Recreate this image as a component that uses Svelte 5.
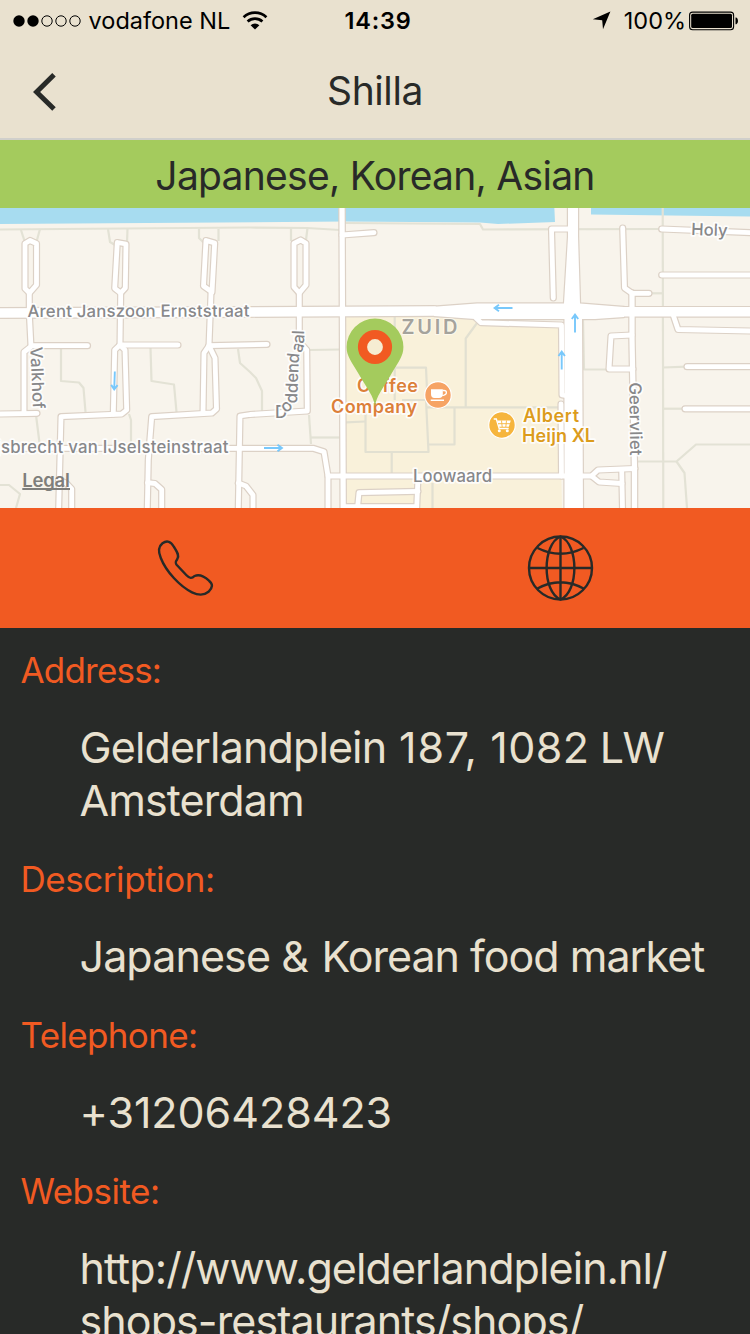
<script>
  const fields = [
    { label: 'Address:', ls: -0.8, lines: [[{ t: 'Gelderlandplein', ls: -0.87 }, { t: ' 187,', ls: 0.8 }, { t: ' 1082', ls: 0.4 }, { t: ' LW', ls: -1.6 }], [{ t: 'Amsterdam', ls: -0.9 }]] },
    { label: 'Description:', ls: -0.45, lines: [[{ t: 'Japanese ', ls: -0.91 }, { t: '& ', ls: 0.2 }, { t: 'Korean food market', ls: -0.99 }]] },
    { label: 'Telephone:', ls: -0.65, lines: [[{ t: '+31206428423', ls: -0.05 }]] },
    { label: 'Website:', ls: -0.5, lines: [[{ t: 'http://www.gelderlandplein.nl/', ls: -0.92 }], [{ t: 'shops-restaurants/shops/', ls: -0.92 }]] }
  ];

  const footpaths = [
    'M0 229.5 250 227.5 307 228 340 230', 'M345 223 480 224 483 229.5 662 229',
    'M21 230 24.5 241', 'M40 229 37 240', 'M108 229 110 242 115 245', 'M127.5 229 127 243',
    'M199 229V238L204 243', 'M218.5 229V241', 'M291 228V241', 'M307.5 228 306 240',
    'M61 348V381L79 382.5 83.5 388 85.5 412', 'M150.5 348 151.5 381 174 384.5 176.5 412',
    'M238 349 240 363 250 372 256 378 262 391V412', 'M129 414 131 420V445', 'M36 415 39.5 443',
    'M0 485H9L20 494 16 508', 'M309 350 340 349.5', 'M309 415 311 444', 'M311 437.5H340',
    'M662.7 208 663.3 508', 'M583 320 584 369.5H608', 'M650 293.3H662', 'M663 367.5 687 366.7',
    'M663 408.7H685', 'M637 461.5H676.5L696 444.5H750', 'M676.5 461.5 684.5 473 687 508'
  ];

  const blocks = [
    'M394.7 316V400', 'M396 367.7H426L427.5 401', 'M402 400H426L428.5 452H365.5V412', 'M426 407.3H562',
    'M454.5 408V444.5H429', 'M346 422.3 365 421.5', 'M391.7 452V474', 'M465.7 407V338.5L477 323', 'M432.5 483V508'
  ];

  const streets = [
    'M25 243.5 30 240.5 36.5 243.5V285L29.5 293 25 288.5Z', 'M29.3 292V313L31 346.5 24 352V413', 'M31 345.7H87.5',
    'M0 414 37 413.3', 'M117.3 242.5 126 244 125.3 288 120.7 293 114.7 288.3Z', 'M120.7 293 120 345H178',
    'M120 345 114.7 350 113.3 414', 'M120 345 125 350 126.7 410 121.7 414 61 416.7 58.7 508', 'M58.7 480 66 483 71.7 489V508',
    'M206 240.5 214.7 243 212 292 203.5 286Z', 'M211 293 209 345.7 267 344.3', 'M209 345.7 204 353 203 413.5',
    'M209 345.7 215 358 216.5 409 212 413 151.7 416.7 148.3 460 147.3 508', 'M147.5 482.7 155 483.5 161.7 489.5V508',
    'M299.3 292V342L306.7 350 307.3 411 250 414.5 240 416 238.3 508', 'M238.3 483 246 486 253 495V508',
    'M294 243.3 300.7 240 306 243.3V285L299.3 293 294 287Z', 'M0 448.3H313L324 451.7 328 476V508',
    'M342 235 374 232.7', 'M328 476H575', 'M357.5 508 359 492.7 418 491.3', 'M418 477 416.7 508', 'M345 506.7H416',
    'M476 318 481 322.7 561.5 325 562 395 568 396', 'M561 404 561.5 476', 'M553.3 298 551.5 229H570',
    'M622.7 228 624.5 288 632 293.3H649', 'M632 335 611 336 609 369H633', 'M661.7 229 750 232.7', 'M661.7 275H750',
    'M673.5 316 678 329.5 750 331', 'M687 366.7H750', 'M685 408.8H750', 'M581 476H591.5L598 470 635 468.5',
    'M591.5 476 599 482 622 483.5', 'M621.7 470 622.5 508'
  ];

  const avenues = ['M342 200 343.2 508', 'M632 293V340L634.5 470V512'];
  const junctions = [
    'M434 306.7 477 303.5H564L568 237V200H578V236L580 303.5 624 307V317L595 319H582L583 512H564.5V319H475L434 316Z'
  ];
  const arrows = [[114.5, 381, 92], [273.5, 448, 0], [503, 308, 180], [575, 323, -90], [561.7, 360, -90]];
</script>

<div class="screen">
  <header>
    <div class="status">
      <svg class="signal" width="68" height="12" viewBox="0 0 68 12">
        {#each [6, 20, 34, 48, 62] as cx, i}
          <circle {cx} cy="6" r={i < 2 ? 5.7 : 5.2} fill={i < 2 ? '#000' : 'none'} stroke={i < 2 ? 'none' : '#000'} />
        {/each}
      </svg>
      <span class="carrier">vodafone NL</span>
      <svg class="wifi" width="26" height="20" viewBox="0 0 26 20">
        <g fill="none" stroke="#000" stroke-width="2.7">
          <path d="M1.6 6.2a16.5 16.5 0 0 1 22.8 0" /><path d="M5.6 10.5a10.8 10.8 0 0 1 14.8 0" />
        </g>
        <path d="M8.6 14.2a6.3 6.3 0 0 1 8.8 0L13 18.6z" />
      </svg>
      <span class="time">14:39</span>
      <svg class="loc" width="19" height="19" viewBox="0 0 19 19"><path d="M18.4.6 11 18.2 10.2 9.2.8 8.3z" /></svg>
      <span class="pct">100%</span>
      <svg class="battery" width="50" height="20" viewBox="0 0 50 20">
        <rect x=".6" y="1.1" width="44" height="17.6" rx="3" fill="none" stroke="#000" stroke-width="1.1" />
        <rect x="2.2" y="2.7" width="40.8" height="14.4" rx="1.5" /><path d="M46.5 6.5h.8q1.7 1 1.7 3.4t-1.7 3.4h-.8z" />
      </svg>
    </div>
    <div class="nav">
      <svg class="back" width="24" height="38" viewBox="0 0 24 38"><path d="M21 1.8 3.6 19 21 36" fill="none" stroke="#282a28" stroke-width="5" /></svg>
      <h1>Shilla</h1>
    </div>
  </header>
  <div class="cuisine"><span>Japanese, Korean, Asian</span></div>

  <svg class="map" width="750" height="300" viewBox="0 208 750 300">
    <rect y="208" width="750" height="300" fill="#f8f4ec" />
    <path d="M0 200H554L555 222 498 224 480 222.5 345 221.5 0 224ZM591 200H750V216.5L591 214.5Z" fill="#a7dcf0" />
    <path d="M346 316 476 318 480 325 558 328 562 508H346Z" fill="#f9f1da" />
    <g fill="none" stroke-width="2.2" stroke-linejoin="round">
      {#each footpaths as d}<path {d} stroke="#e3e2d5" />{/each}
      {#each blocks as d}<path {d} stroke="#e2e0d1" />{/each}
    </g>
    <g fill="none" stroke="#dcd1c6" stroke-linecap="round" stroke-linejoin="round">
      {#each streets as d}<path {d} stroke-width="7.2" />{/each}
      {#each avenues as d}<path {d} stroke-width="7.6" />{/each}
      <path d="M-5 313 250 312 434 311M620 311.8H760" stroke-width="11.8" />
      {#each junctions as d}<path {d} stroke-width="2.4" />{/each}
    </g>
    <g fill="none" stroke="#fff" stroke-linecap="round" stroke-linejoin="round">
      {#each streets as d}<path {d} stroke-width="4.8" />{/each}
      {#each avenues as d}<path {d} stroke-width="5.2" />{/each}
      <path d="M-5 313 250 312 434 311M620 311.8H760" stroke-width="9.4" />
      {#each junctions as d}<path {d} fill="#fff" stroke="none" />{/each}
    </g>
    {#each arrows as [x, y, r]}
      <path transform="translate({x} {y}) rotate({r})" d="M-9.5 0H8M4-3.2 8.4 0 4 3.2" fill="none" stroke="#78c8fb" stroke-width="1.9" />
    {/each}

    <g class="labels">
      <text x="27.5" y="317" textLength="222" transform="rotate(-.1 28 317)">Arent Janszoon Ernststraat</text>
      <text x="-3.5" y="453.3" textLength="232">jsbrecht van IJselsteinstraat</text>
      <text x="413" y="481.5" textLength="79">Loowaard</text>
      <text x="691" y="235" textLength="36.5" transform="rotate(2 691 235)">Holy</text>
      <text transform="translate(30.3 347) rotate(87.5)" textLength="62">Valkhof</text>
      <text transform="translate(629.3 382.5) rotate(89.3)" textLength="73">Geervliet</text>
      <text x="275 286.5 297 297.5 297.8 298.2 298.5 301 303.7 304" y="417.5 413.5 403.5 393.3 382.8 373.3 363.7 353.5 344 334.8" rotate="0 -45 -88 -88 -88 -88 -85 -68 -85 -88">Doddendaal</text>
      <text class="zone" x="401.5" y="333.5" textLength="56">ZUID</text>
      <text class="coffee" x="357" y="392.3" textLength="61">Coffee</text>
      <text class="coffee" x="331" y="412.5" textLength="86">Company</text>
      <text class="shop" x="523" y="421.7" textLength="56">Albert</text>
      <text class="shop" x="522" y="441.7" textLength="73">Heijn XL</text>
    </g>

    <circle cx="438" cy="395" r="13.3" fill="#f6a364" stroke="#fff" stroke-width="1.2" />
    <path d="M431 389.3H442.8V394Q442.8 398 439 398H434.5Q431 398 431 394ZM430.7 399.4H444V401H430.7Z" fill="#fff" />
    <path d="M442.5 390.5h1.5q2.4 0 2.4 2.1t-2.4 2.6l-1.8.3" fill="none" stroke="#fff" stroke-width="1.3" />
    <circle cx="502" cy="425" r="13.3" fill="#f6b53d" stroke="#fff" stroke-width="1.2" />
    <path d="M493.7 419H496.3L499.2 428.5H508.7" fill="none" stroke="#fff" stroke-width="1.4" />
    <path d="M497.2 420.5H510.8L508.8 426.8H499.2Z" fill="#fff" />
    <path d="M498 423.7H510M501.5 420.5 502.2 427M506.5 420.5 505.8 427" stroke="#f6b53d" stroke-width=".9" />
    <circle cx="499.3" cy="430.7" r="1.5" fill="#fff" /><circle cx="507.3" cy="430.7" r="1.5" fill="#fff" />

    <path d="M375 406.5C373.5 396 368 390 359 374.5C351 361 346.6 356 346.6 347A28.4 28.4 0 0 1 403.4 347C403.4 356 399 361 391 374.5C382 390 376.5 396 375 406.5Z" fill="#a4cb5d" />
    <circle cx="375" cy="347" r="12.5" fill="#f6ecd2" stroke="#f15a22" stroke-width="9.2" />
    <text class="legal" x="22.3" y="487.3" textLength="47.5">Legal</text>
    <path d="M22.3 489H70" stroke="#7f7e7b" stroke-width="1.8" />
  </svg>

  <div class="actions">
    <svg width="90" height="90" viewBox="0 0 90 90"><path d="M22.5 23.3C18.5 26.5 18 31.5 20.8 38C26 51.5 40 66.5 52 72.3C58 75.2 64 75.5 68.5 71.8C73 67.5 73 64 69 60.7C65 57 60.5 53.5 54.5 56C52 58.7 49.5 58.5 46.5 55.3L36.8 45C35 43 35.4 41.8 37.2 39.2C39.8 35.5 36.8 31.5 34 27C31 21.5 27 20 22.5 23.3Z" fill="none" stroke="#282a28" stroke-width="2.4" stroke-linejoin="round" /></svg>
    <svg width="90" height="90" viewBox="0 0 90 90">
      <g fill="none" stroke="#282a28" stroke-width="2.4">
        <circle cx="45.5" cy="48" r="31.5" /><path d="M45.5 16.5v63M14 48h63M22.5 28Q45.5 39.5 68.5 28M22.5 68.5Q45.5 56 68.5 68.5" />
        <path d="M45.5 16.5C27 24 27 72 45.5 79.5C64 72 64 24 45.5 16.5Z" />
      </g>
    </svg>
  </div>

  <main>
    {#each fields as f}
      <section>
        <h2><span style:letter-spacing="{f.ls}px">{f.label}</span></h2>
        <p>
          {#each f.lines as line}
            <span class="line">{#each line as part}<span style:letter-spacing="{part.ls}px">{part.t}</span>{/each}</span>
          {/each}
        </p>
      </section>
    {/each}
  </main>
</div>

<style>
  :global(body) { margin: 0; overflow: hidden; }
  .screen { width: 750px; height: 1334px; overflow: hidden; background: #282a28; color: #282a28; font-family: Inter, 'Liberation Sans', sans-serif; font-kerning: normal; display: flex; flex-direction: column; }
  .screen > * { flex: none; }
  svg { display: block; flex: none; }
  header { height: 138px; background: #e9e1cf; border-bottom: 2px solid #d0cfcb; }
  .status { height: 40px; display: flex; align-items: center; color: #000; font-size: 23.5px; line-height: 40px; white-space: nowrap; padding: 1px 0 0 12.6px; box-sizing: border-box; }
  .carrier { width: 142px; margin-left: 8px; }
  .wifi { margin-left: 11px; }
  .time { width: 70px; margin-left: 77px; font-weight: 600; letter-spacing: .8px; }
  .loc { margin-left: 177px; }
  .pct { width: 61px; margin-left: 13.2px; }
  .battery { margin-left: 4.7px; }
  .nav { height: 98px; display: grid; grid-template-columns: 32.5px 24px 1fr 56.5px; align-items: center; }
  .back { grid-column: 2; margin-top: 6px; }
  h1 { margin: 3px 0 0; text-align: center; font-size: 39px; font-weight: 400; line-height: 50px; letter-spacing: -.4px; }
  .cuisine { height: 68px; background: #a4cb5d; font-size: 39px; line-height: 71px; text-align: center; letter-spacing: -.72px; }
  .labels text { font-size: 16.8px; font-weight: 500; fill: #88888a; stroke: #fff; stroke-opacity: .85; stroke-width: 3.5px; stroke-linejoin: round; paint-order: stroke; }
  .labels .zone { font-size: 20px; font-weight: 600; fill: #a5a39c; stroke: #fdfaf0; stroke-width: 2px; }
  .labels .coffee { font-size: 18px; font-weight: 600; fill: #dc8039; }
  .labels .shop { font-size: 18px; font-weight: 600; fill: #dc9c1c; }
  .legal { font-size: 18.5px; font-weight: 600; fill: #7f7e7b; }
  .actions { height: 120px; background: #f15a22; display: grid; grid-template-columns: 375px 375px; padding: 12px 0 0; box-sizing: border-box; }
  .actions svg { margin-left: 140px; }
  main { padding: 20px 0 0 20.5px; display: flex; flex-direction: column; gap: 30px; color: #e9e1cf; }
  section { display: flex; flex-direction: column; gap: 29px; }
  h2 { margin: 0; font-size: 35px; line-height: 44px; font-weight: 400; color: #f15a22; white-space: nowrap; }
  p { margin: 0 0 0 59px; display: flex; flex-direction: column; align-items: flex-start; font-size: 43px; line-height: 53px; }
  .line { display: block; white-space: pre; }
</style>
